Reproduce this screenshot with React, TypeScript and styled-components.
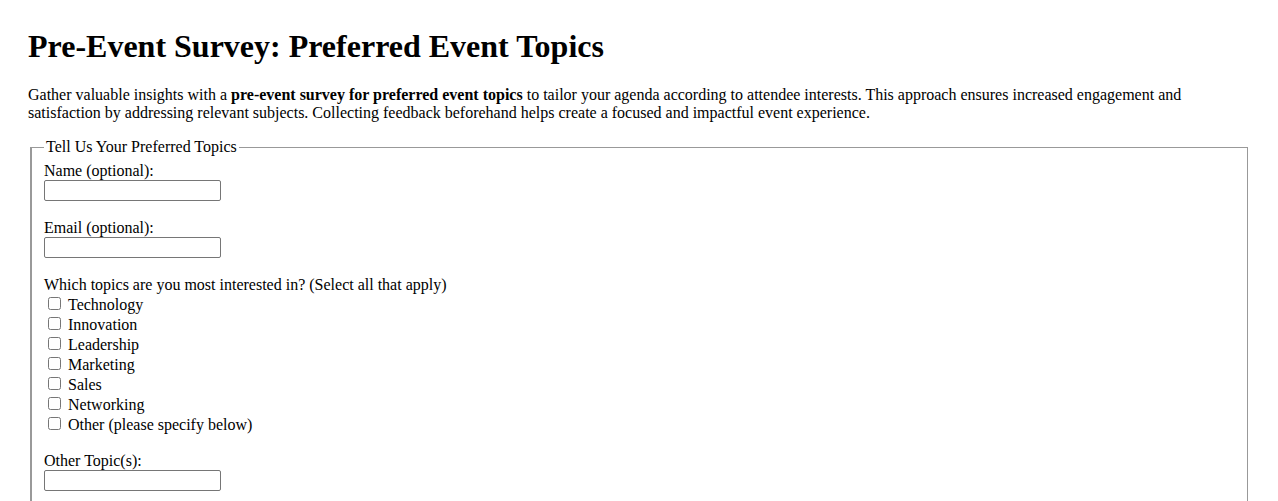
import React from "react";
import { createGlobalStyle, styled } from "styled-components";

const topics = [
  "Technology",
  "Innovation",
  "Leadership",
  "Marketing",
  "Sales",
  "Networking",
  "Other (please specify below)",
];

const GlobalStyle = createGlobalStyle`
  body {
    margin: 0;
    padding: 28px 28px 20px;
    font-family: "Liberation Serif", "Times New Roman", serif;
    font-size: 16px;
    color: #000;
    background: #fff;
  }
`;

const StTitle = styled.h1`
  margin: 0 0 21px;
  font-size: 32px;
  font-weight: bold;
  line-height: 37px;
`;

const StIntro = styled.p`
  margin: 0 0 16px;
  line-height: 18px;
`;

const StFieldset = styled.fieldset`
  margin: 0 2px;
  padding: 6px 12px 12px;
  border-style: solid;
  border-width: 1px 1px 1px 2px;
  border-color: #999;
`;

const StLegend = styled.legend`
  padding: 0 2px;
  line-height: 18px;
`;

const StField = styled.div`
  display: flex;
  flex-direction: column;
  align-items: flex-start;
  margin-bottom: 18px;
`;

const StLabel = styled.label`
  line-height: 18px;
`;

const StTextInput = styled.input`
  box-sizing: border-box;
  width: 177px;
  height: 21px;
  margin: 0;
  border: 1px solid #767676;
  border-radius: 2px;
  font: 13px Arial, sans-serif;
`;

const StQuestion = styled.div`
  line-height: 18px;
  margin: 1px 0 1px;
`;

const StTopicList = styled.div`
  display: flex;
  flex-direction: column;
  margin-bottom: 17px;
`;

const StTopicRow = styled.label`
  display: flex;
  align-items: center;
  height: 20px;
  line-height: 18px;
`;

const StCheckbox = styled.input`
  width: 13px;
  height: 13px;
  margin: 0 7px 3px 4px;
`;

const App = () => {
  return (
    <>
      <GlobalStyle />
      <StTitle>Pre-Event Survey: Preferred Event Topics</StTitle>
      <StIntro>
        Gather valuable insights with a{" "}
        <strong>pre-event survey for preferred event topics</strong> to tailor
        your agenda according to attendee interests. This approach ensures
        increased engagement and satisfaction by addressing relevant subjects.
        Collecting feedback beforehand helps create a focused and impactful
        event experience.
      </StIntro>
      <form>
        <StFieldset>
          <StLegend>Tell Us Your Preferred Topics</StLegend>
          <StField>
            <StLabel htmlFor="name">Name (optional):</StLabel>
            <StTextInput type="text" id="name" />
          </StField>
          <StField>
            <StLabel htmlFor="email">Email (optional):</StLabel>
            <StTextInput type="email" id="email" />
          </StField>
          <StQuestion>
            Which topics are you most interested in? (Select all that apply)
          </StQuestion>
          <StTopicList>
            {topics.map((topic) => (
              <StTopicRow key={topic}>
                <StCheckbox type="checkbox" value={topic} />
                {topic}
              </StTopicRow>
            ))}
          </StTopicList>
          <StField>
            <StLabel htmlFor="other">Other Topic(s):</StLabel>
            <StTextInput type="text" id="other" />
          </StField>
        </StFieldset>
      </form>
    </>
  );
};

export default App;
